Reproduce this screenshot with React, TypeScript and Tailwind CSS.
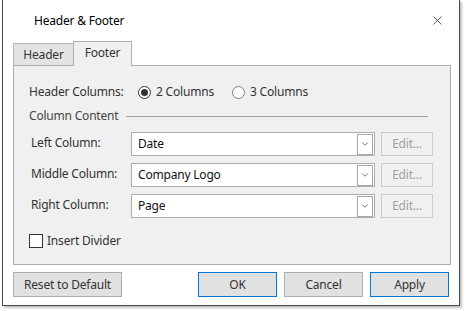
import { ChevronDown, X } from "lucide-react";

const rows = [
	{ label: "Left Column:", value: "Date" },
	{ label: "Middle Column:", value: "Company Logo" },
	{ label: "Right Column:", value: "Page" },
];

function Radio({ checked, label }: { checked?: boolean; label: string }) {
	return (
		<label className="flex items-center gap-[5px]">
			<span
				className={`flex h-[13px] w-[13px] items-center justify-center rounded-full border bg-white ${
					checked ? "border-[#333]" : "border-[#808080]"
				}`}
			>
				{checked && <span className="h-[7px] w-[7px] rounded-full bg-[#333]" />}
			</span>
			<span>{label}</span>
		</label>
	);
}

export default function App() {
	return (
		<div
			className="h-[311px] w-[465px] bg-white text-[12px] tracking-[-0.2px] text-[#333]"
			style={{ fontFamily: '"Noto Sans", "Segoe UI", sans-serif' }}
		>
			<div className="ml-[2px] flex h-[306px] w-[458px] flex-col border-x border-b border-[#4a4a4a] bg-white shadow-[2px_2px_2px_rgba(0,0,0,0.25)]">
				<div className="flex h-[41px] items-center justify-between pl-[31px] pr-[14px] text-black">
					<span className="leading-none">Header &amp; Footer</span>
					<X size={15} strokeWidth={1.2} className="text-[#222]" />
				</div>

				<div className="flex flex-col px-[10px]">
					<div className="flex h-[24px] items-end">
						<div className="flex h-[22px] w-[61px] items-center justify-center border-x border-t border-[#b9b9b9] bg-[#e3e3e3] pt-[1px]">
							Header
						</div>
						<div className="relative z-10 -mb-px -ml-px flex h-[25px] w-[59px] items-start justify-center border-x border-t border-[#adadad] bg-[#f0f0f0] pt-[2px]">
							Footer
						</div>
					</div>

					<div className="flex h-[200px] w-[438px] flex-col border border-[#adadad] bg-[#f0f0f0] px-[15px]">
						<div className="mt-[18px] flex h-[16px] items-center">
							<span className="w-[109px]">Header Columns:</span>
							<div className="w-[94px]">
								<Radio checked label="2 Columns" />
							</div>
							<Radio label="3 Columns" />
						</div>

						<div className="mt-[8px] flex h-[16px] items-center gap-[8px]">
							<span className="text-[#444]">Column Content</span>
							<span className="mt-[1px] h-px w-[302px] bg-[#a0a0a0]" />
						</div>

						<div className="mt-[8px] flex flex-col gap-[7px]">
							{rows.map((row) => (
								<div key={row.label} className="flex h-[24px] items-center">
									<span className="-mt-[2px] w-[102px] pl-[2px]">{row.label}</span>
									<div className="flex h-[24px] w-[244px] items-center border border-[#adadad] bg-white pl-[6px] pr-[1px]">
										<span className="flex-1 text-[#111]">{row.value}</span>
										<span className="flex h-[21px] w-[16px] items-center justify-center border border-[#a8a8a8] bg-white">
											<ChevronDown size={10} strokeWidth={1.8} className="text-[#444]" />
										</span>
									</div>
									<button className="ml-[6px] flex h-[24px] w-[52px] items-center justify-center border border-[#cccccc] bg-[#f0f0f0] text-[#a0a0a0]">
										Edit...
									</button>
								</div>
							))}
						</div>

						<label className="mt-[14px] flex items-center gap-[4px]">
							<span className="h-[14px] w-[14px] border border-[#333] bg-white" />
							<span>Insert Divider</span>
						</label>
					</div>

					<div className="mt-[7px] flex items-center">
						<button className="flex h-[25px] w-[109px] items-center justify-center border border-[#adadad] bg-[#e1e1e1]">
							Reset to Default
						</button>
						<div className="ml-auto flex gap-[7px]">
							<button className="flex h-[25px] w-[79px] items-center justify-center border border-[#0078d7] bg-[#e1e1e1]">
								OK
							</button>
							<button className="flex h-[25px] w-[79px] items-center justify-center border border-[#adadad] bg-[#e1e1e1]">
								Cancel
							</button>
							<button className="flex h-[25px] w-[79px] items-center justify-center border border-[#0078d7] bg-[#e1e1e1]">
								Apply
							</button>
						</div>
					</div>
				</div>
			</div>
		</div>
	);
}
